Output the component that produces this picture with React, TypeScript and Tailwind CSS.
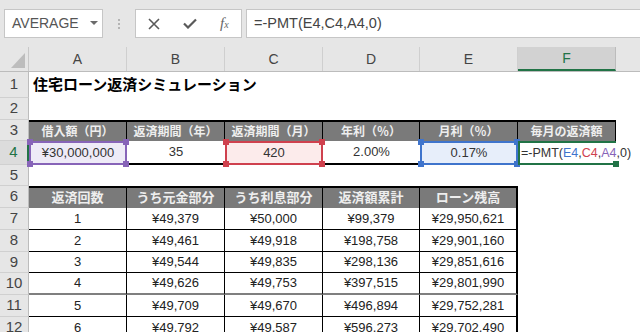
import React from "react";

const FONT = "font-['Liberation_Sans','Noto_Sans_CJK_JP',sans-serif]";
const W = ["w-[98px]", "w-[98px]", "w-[98px]", "w-[97px]", "w-[98px]", "w-[98px]"];

function Row({
  n,
  h,
  active,
  children,
}: {
  n: number;
  h: string;
  active?: boolean;
  children?: React.ReactNode;
}) {
  return (
    <div className={`flex ${h}`}>
      <div
        className={`w-[29px] shrink-0 flex items-center justify-center text-[15px] border-b border-b-[#d0d0d0] ${
          active
            ? "bg-[#dcdcdc] text-[#217346] border-r-2 border-r-[#217346]"
            : "bg-[#e6e6e6] text-[#444] border-r border-r-[#bcbcbc]"
        }`}
      >
        {n}
      </div>
      <div className="flex flex-1 bg-white">{children}</div>
    </div>
  );
}

function Handle({ pos, color }: { pos: string; color: string }) {
  return <div className={`absolute w-[6px] h-[6px] ${pos} ${color}`} />;
}

const hdr3 = ["借入額（円）", "返済期間（年）", "返済期間（月）", "年利（％）", "月利（％）", "毎月の返済額"];
const hdr6 = ["返済回数", "うち元金部分", "うち利息部分", "返済額累計", "ローン残高"];
const data = [
  ["1", "¥49,379", "¥50,000", "¥99,379", "¥29,950,621"],
  ["2", "¥49,461", "¥49,918", "¥198,758", "¥29,901,160"],
  ["3", "¥49,544", "¥49,835", "¥298,136", "¥29,851,616"],
  ["4", "¥49,626", "¥49,753", "¥397,515", "¥29,801,990"],
  ["5", "¥49,709", "¥49,670", "¥496,894", "¥29,752,281"],
  ["6", "¥49,792", "¥49,587", "¥596,273", "¥29,702,490"],
];
const dataH = ["h-[22px]", "h-[22px]", "h-[21px]", "h-[22px]", "h-[22px]", "h-[22px]"];

export default function App() {
  return (
    <div className={`w-[640px] h-[332px] overflow-hidden bg-[#e6e6e6] ${FONT}`}>
      {/* toolbar */}
      <div className="h-[47px] flex items-start pt-[9px] pl-[4px]">
        <div className="w-[99px] h-[29px] bg-white border border-[#c6c6c6] flex items-center justify-between pl-[7px] pr-[4px] text-[14px] text-[#555]">
          <span>AVERAGE</span>
          <svg width="8" height="5" viewBox="0 0 8 5">
            <path d="M0 0 L8 0 L4 4 Z" fill="#6b6b6b" />
          </svg>
        </div>
        <div className="w-[32px] h-[29px] flex flex-col items-center justify-center gap-[2px]">
          <div className="w-[2px] h-[2px] bg-[#b4b4b4]" />
          <div className="w-[2px] h-[2px] bg-[#b4b4b4]" />
          <div className="w-[2px] h-[2px] bg-[#b4b4b4]" />
        </div>
        <div className="w-[107px] h-[29px] bg-white border border-[#c6c6c6] flex items-center pl-[12px]">
          <svg width="12" height="12" viewBox="0 0 12 12" className="mr-[23px]">
            <path d="M1 1 L11 11 M11 1 L1 11" stroke="#5a5a5a" strokeWidth="1.6" fill="none" />
          </svg>
          <svg width="14" height="11" viewBox="0 0 14 11" className="mr-[23px]">
            <path d="M1 5.5 L5 9.5 L13 1.5" stroke="#5a5a5a" strokeWidth="2.2" fill="none" />
          </svg>
          <span className="font-['Liberation_Serif',serif] italic text-[15px] text-[#666] leading-none">
            f<span className="text-[10px]">x</span>
          </span>
        </div>
        <div className="flex-1 h-[29px] ml-[4px] bg-white border-y border-l border-[#c6c6c6] flex items-center pl-[7px] text-[14.5px] text-[#444]">
          =-PMT(E4,C4,A4,0)
        </div>
      </div>

      {/* column header */}
      <div className="flex h-[25px] bg-[#e6e6e6] border-b border-[#bcbcbc]">
        <div className="w-[29px] shrink-0 border-r border-[#c8c8c8]">
          <svg width="28" height="24" viewBox="0 0 28 24">
            <path d="M25 6 L25 21 L11 21 Z" fill="#bdbdbd" />
          </svg>
        </div>
        {["A", "B", "C", "D", "E"].map((c, i) => (
          <div
            key={c}
            className={`${W[i]} shrink-0 flex items-center justify-center text-[14px] text-[#444] border-r border-[#cfcfcf]`}
          >
            {c}
          </div>
        ))}
        <div className="w-[98px] shrink-0 flex items-center justify-center text-[14px] text-[#217346] bg-[#d2d2d2] border-b-2 border-b-[#217346] border-r border-r-[#bcbcbc]">
          F
        </div>
        <div className="flex-1" />
      </div>

      {/* row 1 */}
      <Row n={1} h="h-[26px]">
        <div className="flex items-center pl-[4px] text-[15px] font-bold text-black whitespace-nowrap">
          住宅ローン返済シミュレーション
        </div>
      </Row>
      <Row n={2} h="h-[22px]" />
      {/* row 3 headers */}
      <Row n={3} h="h-[21px]">
        {hdr3.map((t, i) => (
          <div
            key={t}
            className={`${W[i]} shrink-0 flex items-center justify-center bg-[#7a7a7a] text-[#eeeeee] font-bold text-[12px] border-t-2 border-r border-black`}
          >
            {t}
          </div>
        ))}
      </Row>
      {/* row 4 */}
      <Row n={4} h="h-[24px]" active>
        <div className="w-[98px] shrink-0 relative flex items-center justify-center border-2 border-[#8764b8] bg-[#eeebf7] text-[13px] text-[#333]">
          ¥30,000,000
          <Handle pos="-left-[4px] -top-[4px]" color="bg-[#8764b8]" />
          <Handle pos="-right-[4px] -top-[4px]" color="bg-[#8764b8]" />
          <Handle pos="-left-[4px] -bottom-[4px]" color="bg-[#8764b8]" />
          <Handle pos="-right-[4px] -bottom-[4px]" color="bg-[#8764b8]" />
        </div>
        <div className="w-[98px] shrink-0 flex items-center justify-center border-b-2 border-black text-[13px] text-[#333]">
          35
        </div>
        <div className="w-[98px] shrink-0 relative flex items-center justify-center border-2 border-[#cf414e] bg-[#fcebeb] text-[13px] text-[#333]">
          420
          <Handle pos="-left-[4px] -top-[4px]" color="bg-[#cf414e]" />
          <Handle pos="-right-[4px] -top-[4px]" color="bg-[#cf414e]" />
          <Handle pos="-left-[4px] -bottom-[4px]" color="bg-[#cf414e]" />
          <Handle pos="-right-[4px] -bottom-[4px]" color="bg-[#cf414e]" />
        </div>
        <div className="w-[97px] shrink-0 flex items-center justify-center border-b-2 border-black text-[13px] text-[#333]">
          2.00%
        </div>
        <div className="w-[98px] shrink-0 relative flex items-center justify-center border-2 border-[#3f74cc] bg-[#e7eefa] text-[13px] text-[#333]">
          0.17%
          <Handle pos="-left-[4px] -top-[4px]" color="bg-[#3f74cc]" />
          <Handle pos="-right-[4px] -top-[4px]" color="bg-[#3f74cc]" />
          <Handle pos="-left-[4px] -bottom-[4px]" color="bg-[#3f74cc]" />
          <Handle pos="-right-[4px] -bottom-[4px]" color="bg-[#3f74cc]" />
        </div>
        <div className="w-[98px] shrink-0 relative z-10 flex items-center border-l-2 border-y-2 border-[#217346] pl-[1px] text-[12.5px] text-[#333] whitespace-nowrap">
          <span>=-PMT(</span>
          <span className="text-[#3f74cc]">E4</span>
          <span>,</span>
          <span className="text-[#cf414e]">C4</span>
          <span>,</span>
          <span className="text-[#8764b8]">A4</span>
          <span>,0)</span>
          <div className="absolute -right-[3px] -bottom-[4px] w-[6px] h-[6px] bg-[#217346]" />
        </div>
        <div className="flex-1" />
      </Row>
      <Row n={5} h="h-[21px]" />
      {/* row 6 headers */}
      <Row n={6} h="h-[22px]">
        {hdr6.map((t, i) => (
          <div
            key={t}
            className={`${W[i]} shrink-0 flex items-center justify-center bg-[#7a7a7a] text-[#eeeeee] font-bold text-[13px] border-t-2 border-black ${
              i === 4 ? "border-r-2" : "border-r"
            }`}
          >
            {t}
          </div>
        ))}
      </Row>
      {data.map((r, ri) => (
        <Row key={ri} n={7 + ri} h={dataH[ri]}>
          {r.map((v, i) => (
            <div
              key={i}
              className={`${W[i]} shrink-0 flex items-center justify-center text-[13px] text-[#222] border-black ${
                i === 4 ? "border-r-2" : "border-r"
              } ${ri === 3 ? "border-b-2 border-b-[#7f7f7f]" : "border-b"}`}
            >
              {v}
            </div>
          ))}
        </Row>
      ))}
    </div>
  );
}
